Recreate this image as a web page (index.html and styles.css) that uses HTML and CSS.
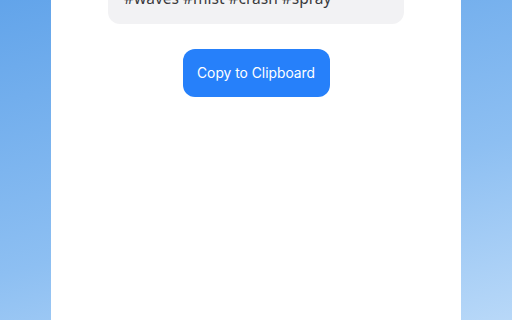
FILE: index.html
```html
<!DOCTYPE html>
<html>
<head>
<meta charset="utf-8">
<link rel="stylesheet" href="styles.css">
</head>
<body>
<main class="panel">
  <div class="tags">#waves #mist #crash #spray</div>
  <button class="copy">Copy to Clipboard</button>
</main>
</body>
</html>
```
FILE: styles.css
```css
html, body {
  margin: 0;
  height: 100%;
}
body {
  background: linear-gradient(165deg, #62a4ea 0%, #8dbff2 60%, #b8d8f8 100%);
  font-family: Inter, "Noto Sans", sans-serif;
  overflow: hidden;
}
.panel {
  width: 410px;
  height: 100%;
  margin: 0 auto;
  background: #ffffff;
  display: flex;
  flex-direction: column;
  align-items: center;
  padding: 0 57px;
  box-sizing: border-box;
}
.tags {
  align-self: stretch;
  margin-top: -31px;
  background: #f2f2f4;
  border-radius: 12px;
  padding: 17px 16px 14px;
  font-family: "Noto Sans", sans-serif;
  font-size: 15.5px;
  line-height: 24px;
  color: #3a3a3c;
}
.copy {
  margin-top: 25px;
  height: 48px;
  width: 147px;
  border: none;
  border-radius: 12px;
  background: #2680fa;
  color: #ffffff;
  font-family: Inter, "Noto Sans", sans-serif;
  font-size: 13.8px;
  padding: 0;
}
```
